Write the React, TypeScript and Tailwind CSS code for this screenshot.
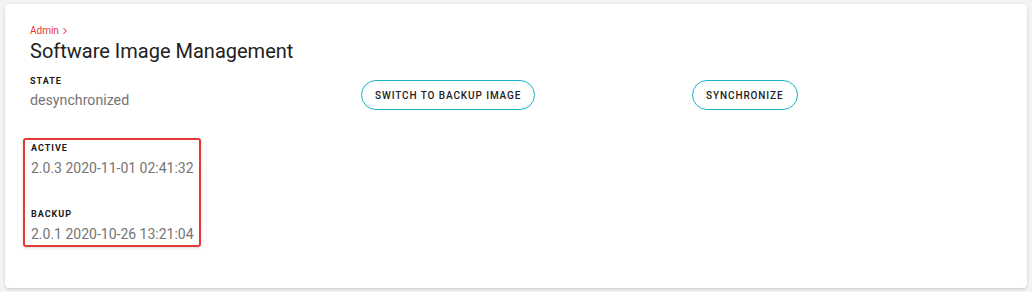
import { ChevronRight } from "lucide-react";

const IMAGES = [
  { label: "Active", value: "2.0.3 2020-11-01 02:41:32" },
  { label: "Backup", value: "2.0.1 2020-10-26 13:21:04" },
];

function FieldLabel({ children }: { children: React.ReactNode }) {
  return <div className="text-[9px] font-bold uppercase leading-[12px] tracking-[1px] text-[#1a1a1a]">{children}</div>;
}

function OutlineButton({ children }: { children: React.ReactNode }) {
  return (
    <button className="h-[30px] rounded-full border-[1.5px] border-[#1ab3c9] bg-white px-[13px] text-[10px] font-medium uppercase tracking-[0.9px] text-[#222]">
      {children}
    </button>
  );
}

export default function App() {
  return (
    <div className="h-[292px] w-[1032px] bg-[#f3f3f3] px-[5px] pt-[4px] font-['Roboto',sans-serif]">
      <div className="h-[284px] rounded-[4px] bg-white px-[25px] pt-[20px] shadow-[0_1px_3px_rgba(0,0,0,0.18)]">
        <div className="flex items-center text-[10px] leading-[14px] text-[#e53935]">
          Admin
          <ChevronRight className="ml-[1px] h-[10px] w-[10px]" strokeWidth={2.5} />
        </div>
        <h1 className="text-[20px] font-normal leading-[26px] text-[#212121]">Software Image Management</h1>

        <div className="mt-[11px] grid grid-cols-[331px_331px_1fr]">
          <div>
            <FieldLabel>State</FieldLabel>
            <div className="mt-[4px] text-[14.2px] leading-[18px] text-[#757575]">desynchronized</div>
          </div>
          <div className="pt-[5px]">
            <OutlineButton>Switch to backup image</OutlineButton>
          </div>
          <div className="pt-[5px]">
            <OutlineButton>Synchronize</OutlineButton>
          </div>
        </div>

        <div className="-ml-[7px] mt-[28px] flex w-[178px] flex-col rounded-[3px] border-2 border-[#e53935] px-[6px] pb-[2px] pt-[2px] shadow-[0_1px_3px_rgba(0,0,0,0.15)]">
          {IMAGES.map((img, i) => (
            <div key={img.label} className={i > 0 ? "mt-[31px]" : ""}>
              <FieldLabel>{img.label}</FieldLabel>
              <div className="mt-[5px] whitespace-nowrap text-[14px] leading-[18px] text-[#757575]">{img.value}</div>
            </div>
          ))}
        </div>
      </div>
    </div>
  );
}
